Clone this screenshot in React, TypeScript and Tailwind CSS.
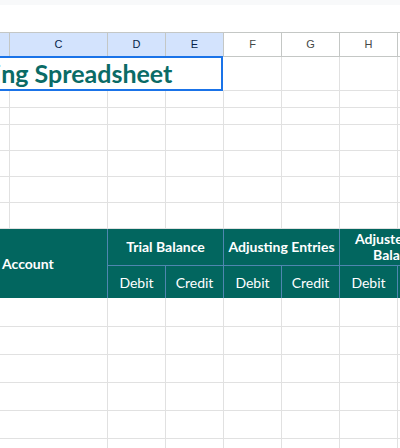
import React from 'react';

const GRID = 'border-[#e1e1e1]';

// visible columns after the sheet has been scrolled right: B (partial), C..I
const cols = [
  { key: 'B', w: 'w-[10px]', sel: true },
  { key: 'C', w: 'w-[98px]', sel: true },
  { key: 'D', w: 'w-[58px]', sel: true },
  { key: 'E', w: 'w-[58px]', sel: true },
  { key: 'F', w: 'w-[58px]', sel: false },
  { key: 'G', w: 'w-[58px]', sel: false },
  { key: 'H', w: 'w-[58px]', sel: false },
  { key: 'I', w: 'w-[58px]', sel: false },
];

const blankRows = ['h-[17px]', 'h-[17px]', 'h-[26px]', 'h-[26px]', 'h-[26px]', 'h-[26px]'];
const dataRows = ['h-[29px]', 'h-[28px]', 'h-[28px]', 'h-[28px]', 'h-[28px]', 'h-[28px]'];

const groups = ['Trial Balance', 'Adjusting Entries', 'Adjusted Trial Balance'];

const App: React.FC = () => {
  return (
    <div className="w-[400px] h-[448px] overflow-hidden bg-white font-['Lato','Liberation_Sans',sans-serif]">
      <div className="h-[5px] bg-[#f8f9fa]" />
      <div className="h-[27px]" />

      {/* column letters */}
      <div className="flex h-[25px] border-y border-[#c4c7c5] font-['Liberation_Sans',Arial,sans-serif] text-[11px]">
        {cols.map((c) => (
          <div
            key={c.key}
            className={`${c.w} shrink-0 border-r border-[#c4c7c5] flex items-center justify-center ${
              c.sel ? 'bg-[#d3e3fd] text-[#041e49]' : 'text-[#444746]'
            }`}
          >
            {c.key === 'B' ? '' : c.key}
          </div>
        ))}
      </div>

      {/* title row */}
      <div className={`relative flex h-[34px] border-b ${GRID}`}>
        <div className="w-[224px] shrink-0 flex items-center overflow-hidden">
          <span className="ml-[-98px] whitespace-nowrap text-[25px] font-bold leading-none text-[#0a6b66]">
            Accounting Spreadsheet
          </span>
        </div>
        {cols.slice(4).map((c) => (
          <div key={c.key} className={`${c.w} shrink-0 border-r ${GRID}`} />
        ))}
        <div className="absolute left-[-4px] top-[-1px] w-[227px] h-[35px] border-2 border-[#1a73e8]" />
      </div>

      {blankRows.map((h, i) => (
        <div key={i} className={`flex ${h} border-b ${GRID}`}>
          {cols.map((c) => (
            <div key={c.key} className={`${c.w} shrink-0 border-r ${GRID}`} />
          ))}
        </div>
      ))}

      {/* table header */}
      <div className="flex h-[69px] bg-[#02665f] text-white text-[14px]">
        <div className="w-[108px] shrink-0 border-r border-[#4f86b0] flex items-center pl-[2px] font-bold">
          Account
        </div>
        {groups.map((g) => (
          <div key={g} className="w-[116px] shrink-0 flex flex-col">
            <div className="h-[37px] border-b border-r border-[#4f86b0] flex items-center justify-center text-center font-bold leading-[16px]">
              {g}
            </div>
            <div className="flex flex-1">
              <div className="w-[58px] border-r border-[#4f86b0] flex items-center justify-center">Debit</div>
              <div className="w-[58px] border-r border-[#4f86b0] flex items-center justify-center">Credit</div>
            </div>
          </div>
        ))}
      </div>

      {dataRows.map((h, i) => (
        <div key={i} className={`flex ${h} border-b ${GRID}`}>
          <div className={`w-[108px] shrink-0 border-r ${GRID}`} />
          {cols.slice(2).map((c) => (
            <div key={c.key} className={`${c.w} shrink-0 border-r ${GRID}`} />
          ))}
        </div>
      ))}
    </div>
  );
};

export default App;
